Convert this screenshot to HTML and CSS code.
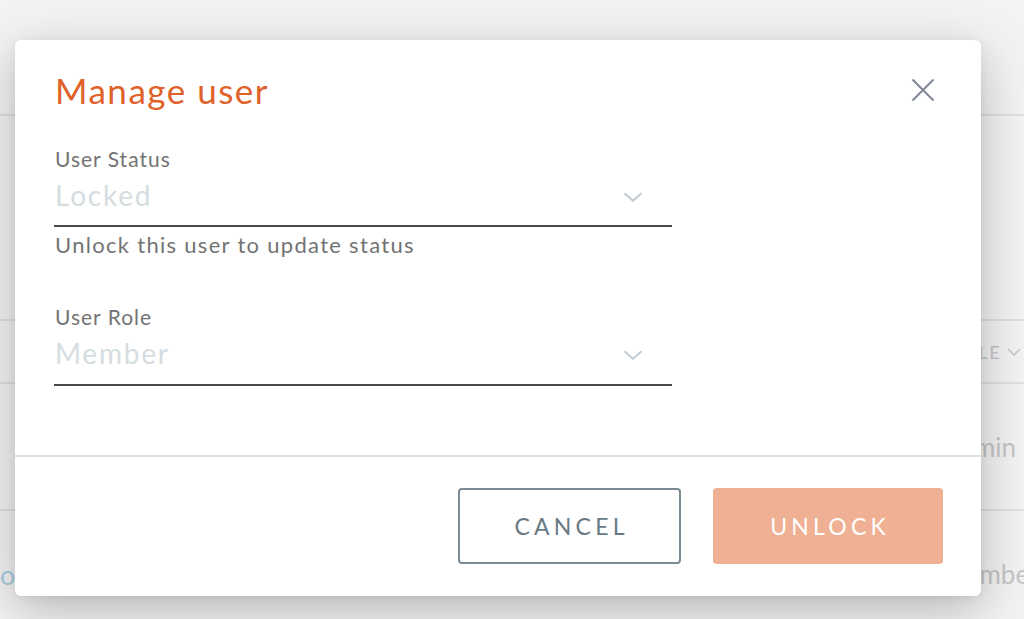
FILE: index.html
```html
<!DOCTYPE html>
<html lang="en">
<head>
<meta charset="utf-8">
<title>Manage user</title>
<link rel="stylesheet" href="styles.css">
</head>
<body>
<div class="page">
  <div class="bg-top"></div>
  <div class="bg-block"></div>
  <div class="bg-row bg-head"><span class="bg-left"></span><span class="bg-col">ROLE <svg class="bg-chev" width="14" height="8" viewBox="0 0 14 8"><path d="M1 1l6 6 6-6" fill="none" stroke="currentColor" stroke-width="1.5"/></svg></span></div>
  <div class="bg-row bg-data"><span class="bg-left"></span><span class="bg-col">Admin</span></div>
  <div class="bg-row bg-data"><span class="bg-left bg-link">o</span><span class="bg-col">Member</span></div>
</div>

<div class="overlay">
  <div class="modal" role="dialog" aria-labelledby="mtitle">
    <div class="modal-head">
      <h2 id="mtitle" class="modal-title">Manage user</h2>
      <button class="close" aria-label="Close">
        <svg width="24" height="24" viewBox="0 0 24 24"><path d="M1.5 1.5l21 21M22.5 1.5l-21 21" fill="none" stroke="currentColor" stroke-width="2"/></svg>
      </button>
    </div>
    <div class="modal-body">
      <div class="field">
        <div class="field-label">User Status</div>
        <div class="select">
          <span class="select-value">Locked</span>
          <svg class="chev" width="20" height="10" viewBox="0 0 20 10"><path d="M1.5 1.2l8.5 7.6 8.5-7.6" fill="none" stroke="currentColor" stroke-width="2"/></svg>
        </div>
        <div class="field-help">Unlock this user to update status</div>
      </div>
      <div class="field field-role">
        <div class="field-label">User Role</div>
        <div class="select">
          <span class="select-value">Member</span>
          <svg class="chev" width="20" height="10" viewBox="0 0 20 10"><path d="M1.5 1.2l8.5 7.6 8.5-7.6" fill="none" stroke="currentColor" stroke-width="2"/></svg>
        </div>
      </div>
    </div>
    <div class="modal-foot">
      <button class="btn btn-outline">CANCEL</button>
      <button class="btn btn-primary">UNLOCK</button>
    </div>
  </div>
</div>
</body>
</html>
```
FILE: styles.css
```css
* { box-sizing: border-box; }
html, body { margin: 0; padding: 0; }
body {
  background: #f3f3f3;
  font-family: "Lato", "Noto Sans", sans-serif;
  width: 1024px;
  height: 619px;
  overflow: hidden;
  position: relative;
}

/* background page (dimmed) */
.page { color: #c6c6c6; font-size: 26px; }
.bg-top { height: 116px; border-bottom: 2px solid #e0e0e0; }
.bg-block { height: 205px; border-bottom: 2px solid #e0e0e0; }
.bg-row { display: flex; align-items: center; border-bottom: 2px solid #e0e0e0; }
.bg-head { height: 63px; font-size: 18px; letter-spacing: 1.5px; }
.bg-data { height: 127px; }
.bg-left { flex: 1; }
.bg-link { color: #a6cfe0; font-size: 27px; padding-top: 2px; }
.bg-col { width: 82px; flex: none; display: flex; align-items: center; gap: 6px; white-space: nowrap; }
.bg-head .bg-col { width: 74px; }
.bg-chev { color: #c6c6c6; }

/* overlay + modal */
.overlay { position: absolute; inset: 0; }
.modal {
  position: absolute;
  left: 15px;
  top: 40px;
  width: 966px;
  height: 556px;
  background: #fff;
  border-radius: 6px;
  box-shadow: 0 14px 50px rgba(0,0,0,0.25), 0 2px 8px rgba(0,0,0,0.06);
  display: flex;
  flex-direction: column;
}
.modal-head {
  display: flex;
  justify-content: space-between;
  align-items: flex-start;
  padding: 30px 46px 0 40px;
}
.modal-title {
  margin: 0;
  font-weight: 400;
  font-size: 35px;
  line-height: 40px;
  letter-spacing: 1.5px;
  color: #e0622a;
}
.close {
  margin-top: 8px;
  border: 0;
  background: none;
  padding: 0;
  width: 24px;
  height: 24px;
  color: #7f8794;
  cursor: pointer;
}
.close svg { display: block; }

.modal-body { flex: 1; padding: 0 40px; }
.field { width: 618px; margin-left: -1px; }
.field-label {
  margin-top: 36px;
  padding-left: 1px;
  font-size: 21px;
  line-height: 26px;
  letter-spacing: 1px;
  color: #737373;
}
.select {
  display: flex;
  align-items: flex-start;
  justify-content: space-between;
  height: 55px;
  padding: 6px 29px 0 1px;
  border-bottom: 2px solid #4a4a4a;
}
.select-value { font-size: 28px; line-height: 34px; letter-spacing: 1.8px; color: #d5dde1; }
.chev { color: #c3ccd3; margin-top: 14px; }
.field-help {
  padding-left: 1px;
  margin-top: 4px;
  font-size: 22px;
  line-height: 28px;
  letter-spacing: 1.3px;
  color: #737373;
}
.field-role .field-label { margin-top: 45px; }
.field-role .select { height: 56px; }

.modal-foot {
  border-top: 2px solid #e0e0e0;
  display: flex;
  justify-content: flex-end;
  gap: 32px;
  padding: 31px 38px 32px;
}
.btn {
  height: 76px;
  border-radius: 4px;
  font-family: "Lato", "Noto Sans", sans-serif;
  font-size: 23px;
  letter-spacing: 4.2px;
  padding: 0 0 0 4.2px;
  cursor: pointer;
}
.btn-outline {
  width: 223px;
  background: #fff;
  border: 2px solid #7b8b96;
  color: #687a85;
}
.btn-primary {
  width: 230px;
  background: #efb094;
  border: 0;
  color: #fff;
}
```
